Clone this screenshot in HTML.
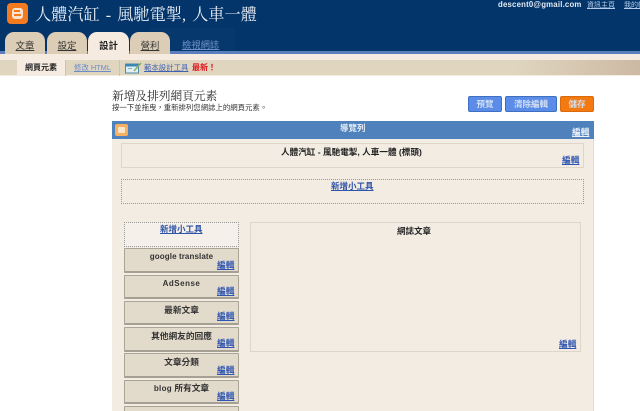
<!DOCTYPE html>
<html lang="zh-TW"><head><meta charset="utf-8"><title>Blogger</title>
<style>
html,body{margin:0;padding:0;background:#fff;}
#p{position:relative;width:640px;height:411px;overflow:hidden;background:#fff;font-family:"Liberation Sans","Noto Sans CJK TC",sans-serif;color:#222;filter:blur(.3px);}
#p div,#p a,#p svg{position:absolute;}
.t{white-space:nowrap;line-height:1;}
a{color:#2f55a8;text-decoration:underline;}
.tab{top:32px;height:22px;width:40px;background:#dccdb6;border-radius:9px 9px 0 0;text-align:center;font-size:9.4px;line-height:27px;color:#333;text-decoration:underline;}
.it{left:124px;width:113px;background:#e2dacb;border:1px solid #aaa497;border-bottom:2px solid #a5a093;border-radius:1px;}
.lbl{left:124px;width:115px;text-align:center;font-size:8.7px;font-weight:bold;color:#333;white-space:nowrap;line-height:1;}
.lat{font-size:8px;letter-spacing:.3px;}
.ed{font-size:8.7px;font-weight:bold;color:#2f55b0;line-height:1;white-space:nowrap;text-decoration:underline;}
.btn{top:96px;height:14px;border:1px solid #3f6fc0;background:#5b8ce8;border-radius:2px;color:#d3dff2;font-size:8.5px;font-weight:bold;line-height:15px;text-align:center;}
</style></head><body>
<div id="p">
<div style="left:0;top:0;width:640px;height:51px;background:#03356a"></div>
<div style="left:150px;top:28px;width:85px;height:23px;background:#06386e"></div>
<div style="left:0;top:51px;width:640px;height:3px;background:#5a7fbd"></div>
<div style="left:0;top:54px;width:640px;height:6px;background:#f5ebe1"></div>
<div style="left:0;top:60px;width:640px;height:15px;background:linear-gradient(90deg,#e0d6c0 0,#e0d6c0 80%,#cdb9a3 100%)"></div>
<div style="left:0;top:75px;width:640px;height:1px;background:#f3ecdf"></div>

<div style="left:7px;top:3px;width:21px;height:21px;background:#f47a20;border-radius:4px"></div>
<div style="left:12px;top:8px;width:11px;height:11px;background:#fbe3cf;border-radius:3px"></div>
<div style="left:14px;top:10px;width:6px;height:2px;background:#f47a20"></div>
<div style="left:14px;top:14px;width:7px;height:2px;background:#f47a20"></div>
<div class="t" style="left:35px;top:7px;font-size:16.2px;word-spacing:2px;color:#e8eef5;font-family:'Liberation Serif','Noto Serif CJK SC',serif;">人體汽缸 - 風馳電掣, 人車一體</div>

<div class="t" style="left:498px;top:1px;font-size:7.8px;font-weight:bold;color:#e4eaf2;letter-spacing:.2px">descent0@gmail.com</div>
<a class="t" style="left:587px;top:2px;font-size:7px;color:#b5cbe8;">資訊主頁</a>
<a class="t" style="left:624px;top:2px;font-size:7px;color:#b5cbe8;">我的帳戶</a>

<div class="tab" style="left:5px">文章</div>
<div class="tab" style="left:47px">設定</div>
<div class="tab" style="left:88px;width:41px;top:32px;height:28px;background:#f5ebe1;font-weight:bold;text-decoration:none;color:#222">設計</div>
<div class="tab" style="left:130px">營利</div>
<a class="t" style="left:182px;top:41px;font-size:9.3px;color:#6f93c8">檢視網誌</a>

<div style="left:17px;top:60px;width:48px;height:16px;background:#f5ebe1"></div>
<div style="left:65px;top:60px;width:1px;height:16px;background:#cfc3ab"></div>
<div style="left:119px;top:60px;width:1px;height:16px;background:#cfc3ab"></div>
<div class="t" style="left:25px;top:64px;font-size:8px;font-weight:bold;color:#222">網頁元素</div>
<a class="t" style="left:74px;top:64px;font-size:7.4px;color:#6b8cc8">修改 HTML</a>
<svg style="left:125px;top:62px" width="17" height="12" viewBox="0 0 17 12"><rect x=".5" y="2" width="13" height="9" fill="#dff0f4" stroke="#4d88a8"/><rect x="1" y="2" width="12" height="2.5" fill="#3b86b5"/><path d="M9 9L16 1" stroke="#8fae5a" stroke-width="1.5"/><rect x="3" y="6" width="4" height="1" fill="#8fb0c0"/></svg>
<a class="t" style="left:144px;top:64px;font-size:7.4px;color:#3f63b0">範本設計工具</a>
<div class="t" style="left:192px;top:64px;font-size:8px;font-weight:bold;color:#e0141c">最新！</div>

<div class="t" style="left:112px;top:91px;font-size:11.7px;color:#2a2a2a;font-family:'Liberation Serif','Noto Serif CJK SC',serif;">新增及排列網頁元素</div>
<div class="t" style="left:112px;top:104px;font-size:7.4px;color:#333">按一下並拖曳，重新排列您網誌上的網頁元素。</div>

<div class="btn" style="left:468px;width:32px;">預覽</div>
<div class="btn" style="left:505px;width:50px;">清除編輯</div>
<div class="btn" style="left:560px;width:32px;background:#f47a10;border-color:#d96a10;">儲存</div>

<div style="left:112px;top:121px;width:482px;height:290px;background:#f2ece3;border-right:1px solid #e0dcd0;box-sizing:border-box;"></div>
<div style="left:112px;top:121px;width:482px;height:18px;background:#4f81bd"></div>
<div style="left:115px;top:124px;width:13px;height:12px;background:#f5b060;border-radius:2px"></div>
<div style="left:118px;top:127px;width:7px;height:6px;background:#fbe6c8;border-radius:1px"></div>
<div class="t" style="left:340px;top:124px;font-size:8.5px;font-weight:bold;color:#e6edf5">導覽列</div>
<div class="ed" style="left:572px;top:128px;color:#eef2f8">編輯</div>

<div style="left:121px;top:143px;width:461px;height:23px;border:1px solid #ddd6c9;background:#f2ece3"></div>
<div class="t" style="left:281px;top:148px;font-size:8.6px;font-weight:bold;color:#222;">人體汽缸 - 風馳電掣, 人車一體 (標頭)</div>
<div class="ed" style="left:562px;top:156px">編輯</div>

<div style="left:121px;top:179px;width:461px;height:23px;border:1px dotted #999"></div>
<a class="t" style="left:331px;top:182px;font-size:8.5px;font-weight:bold;">新增小工具</a>

<div style="left:124px;top:222px;width:113px;height:23px;border:1px dotted #999;background:#f5f0e9"></div>
<a class="t" style="left:160px;top:225px;font-size:8.5px;font-weight:bold;">新增小工具</a>

<div class="it" style="top:248px;height:22px"></div>
<div class="lbl" style="top:252px"><span class="lat" style="letter-spacing:.1px">google translate</span></div><div class="ed" style="left:217px;top:261px">編輯</div>
<div class="it" style="top:275px;height:21px"></div>
<div class="lbl" style="top:279px"><span class="lat" style="letter-spacing:.5px">AdSense</span></div><div class="ed" style="left:217px;top:287px">編輯</div>
<div class="it" style="top:301px;height:21px"></div>
<div class="lbl" style="top:306px">最新文章</div><div class="ed" style="left:217px;top:312px">編輯</div>
<div class="it" style="top:327px;height:22px"></div>
<div class="lbl" style="top:332px">其他網友的回應</div><div class="ed" style="left:217px;top:339px">編輯</div>
<div class="it" style="top:353px;height:22px"></div>
<div class="lbl" style="top:358px">文章分類</div><div class="ed" style="left:217px;top:366px">編輯</div>
<div class="it" style="top:380px;height:21px"></div>
<div class="lbl" style="top:384px"><span class="lat">blog</span> 所有文章</div><div class="ed" style="left:217px;top:392px">編輯</div>
<div class="it" style="top:406px;height:21px"></div>

<div style="left:250px;top:222px;width:329px;height:128px;border:1px solid #ddd6c9;background:#f2ece3"></div>
<div class="t" style="left:397px;top:227px;font-size:8.5px;font-weight:bold;color:#222">網誌文章</div>
<div class="ed" style="left:559px;top:340px">編輯</div>
</div>
</body></html>
